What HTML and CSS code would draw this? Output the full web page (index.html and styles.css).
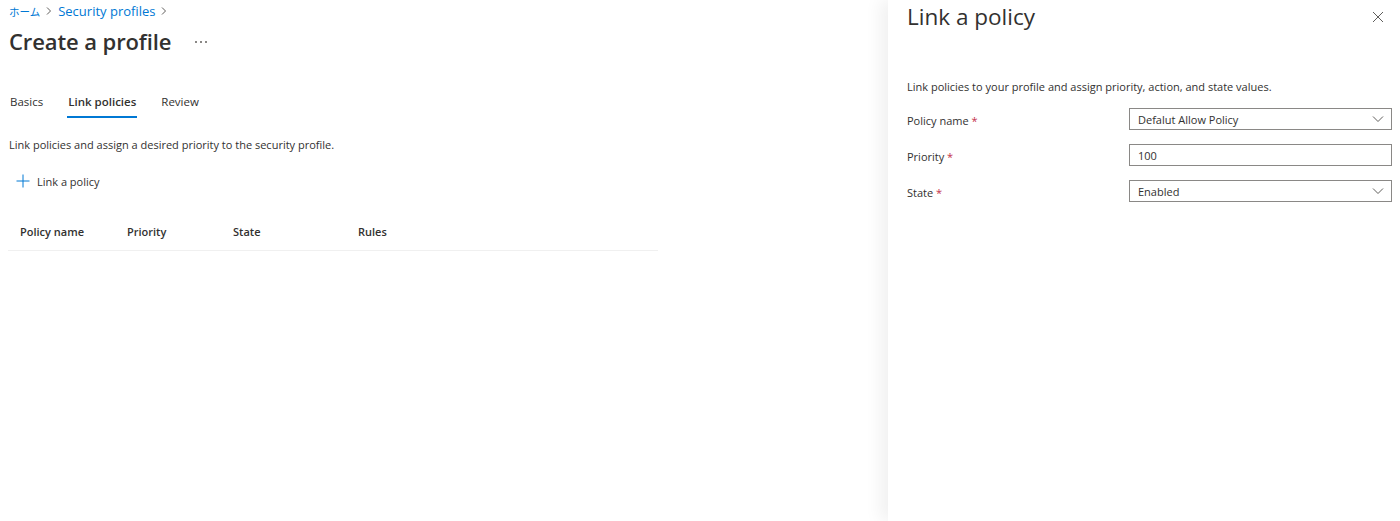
FILE: index.html
```html
<!DOCTYPE html>
<html lang="en">
<head>
<meta charset="utf-8">
<title>Create a profile</title>
<link rel="stylesheet" href="styles.css">
</head>
<body>
<div class="page">
  <main class="main">
    <nav class="crumbs">
      <a class="crumb jp">ホーム</a>
      <span class="sep"><svg width="8" height="10" viewBox="0 0 8 10"><path d="M2 1.5 L5.5 5 L2 8.5" fill="none" stroke="#605e5c" stroke-width="1"/></svg></span>
      <a class="crumb">Security profiles</a>
      <span class="sep"><svg width="8" height="10" viewBox="0 0 8 10"><path d="M2 1.5 L5.5 5 L2 8.5" fill="none" stroke="#605e5c" stroke-width="1"/></svg></span>
    </nav>
    <div class="titlerow">
      <h1 class="title">Create a profile</h1>
      <span class="more"><i></i><i></i><i></i></span>
    </div>
    <div class="tabs">
      <span class="tab">Basics</span>
      <span class="tab active">Link policies</span>
      <span class="tab">Review</span>
    </div>
    <p class="desc">Link policies and assign a desired priority to the security profile.</p>
    <button class="cmd">
      <svg width="16" height="16" viewBox="0 0 16 16"><path d="M8 1.5 V14.5 M1.5 8 H14.5" stroke="#0078d4" stroke-width="1" fill="none"/></svg>
      <span>Link a policy</span>
    </button>
    <div class="thead">
      <span class="th c1">Policy name</span>
      <span class="th c2">Priority</span>
      <span class="th c3">State</span>
      <span class="th c4">Rules</span>
    </div>
  </main>
  <aside class="panel">
    <div class="phead">
      <h2 class="ptitle">Link a policy</h2>
      <button class="close"><svg width="12" height="12" viewBox="0 0 12 12"><path d="M1 1 L11 11 M11 1 L1 11" stroke="#605e5c" stroke-width="1" fill="none"/></svg></button>
    </div>
    <p class="pdesc">Link policies to your profile and assign priority, action, and state values.</p>
    <div class="form">
      <div class="frow">
        <label class="flabel">Policy name <span class="req">*</span></label>
        <div class="field select"><span>Defalut Allow Policy</span><svg width="12" height="8" viewBox="0 0 12 8"><path d="M1 1.5 L6 6.5 L11 1.5" stroke="#605e5c" stroke-width="1" fill="none"/></svg></div>
      </div>
      <div class="frow">
        <label class="flabel">Priority <span class="req">*</span></label>
        <div class="field"><span>100</span></div>
      </div>
      <div class="frow">
        <label class="flabel">State <span class="req">*</span></label>
        <div class="field select"><span>Enabled</span><svg width="12" height="8" viewBox="0 0 12 8"><path d="M1 1.5 L6 6.5 L11 1.5" stroke="#605e5c" stroke-width="1" fill="none"/></svg></div>
      </div>
    </div>
  </aside>
</div>
</body>
</html>
```

FILE: styles.css
```css
* { box-sizing: border-box; }
html, body { margin: 0; padding: 0; height: 100%; }
body {
  font-family: "Open Sans", "Noto Sans", "Noto Sans CJK JP", sans-serif;
  font-size: 11px;
  color: #323130;
  background: #fff;
  overflow: hidden;
}
.page { display: flex; height: 521px; }
.main { flex: 1; padding: 0 0 0 8px; }
.crumbs { display: flex; align-items: center; height: 22px; padding-left: 1px; color: #0078d4; font-size: 13px; }
.crumb { color: #0078d4; }
.crumb.jp { font-family: "Noto Sans CJK JP", sans-serif; font-size: 10.5px; }
.sep { display: inline-flex; margin: 0 5px 0 5px; }
.titlerow { display: flex; align-items: center; height: 38px; padding-left: 1px; }
.title { margin: 0; font-size: 22px; font-weight: 600; color: #323130; letter-spacing: -0.1px; }
.more { display: inline-flex; gap: 3px; margin-left: 24px; margin-top: 2px; }
.more i { width: 2px; height: 2px; background: #8a8886; display: block; }
.tabs { display: flex; margin-top: 28px; height: 30px; padding-left: 2px; }
.tab { position: relative; margin-right: 25px; line-height: 28px; color: #323130; font-size: 11.5px; }
.tab.active { font-weight: 600; }
.tab.active::after { content: ""; position: absolute; left: -1px; right: -1px; bottom: 0; height: 2px; background: #0078d4; }
.desc { margin: 19px 0 0 1px; line-height: 16px; }
.cmd { display: flex; align-items: center; gap: 6px; border: 0; background: none; padding: 0 0 0 7px; margin-top: 18px; font: inherit; color: #323130; height: 20px; }
.thead { display: flex; align-items: center; width: 650px; height: 39px; margin-top: 21px; border-bottom: 1px solid #f0f0f0; }
.th { font-weight: 600; font-size: 11px; }
.c1 { margin-left: 12px; width: 107px; }
.c2 { width: 106px; }
.c3 { width: 125px; }
.panel {
  width: 512px; flex: none; height: 521px;
  background: #fff;
  box-shadow: -8px 0 16px rgba(0,0,0,0.06);
  padding: 0 8px 0 19px;
}
.phead { display: flex; justify-content: space-between; align-items: center; height: 32px; }
.ptitle { margin: 0; font-size: 22.5px; font-weight: 400; color: #323130; }
.close { border: 0; background: none; padding: 0; margin-right: 8px; margin-top: 2px; display: flex; }
.pdesc { margin: 46px 0 0; line-height: 18px; }
.form { margin-top: 12px; display: flex; flex-direction: column; gap: 14px; }
.frow { display: flex; align-items: center; }
.flabel { width: 222px; padding-top: 3px; }
.req { color: #c4314b; }
.field { flex: 1; height: 22px; border: 1px solid #8a8886; display: flex; align-items: center; justify-content: space-between; padding: 0 8px; }
.field svg { margin-right: -1px; }
```
